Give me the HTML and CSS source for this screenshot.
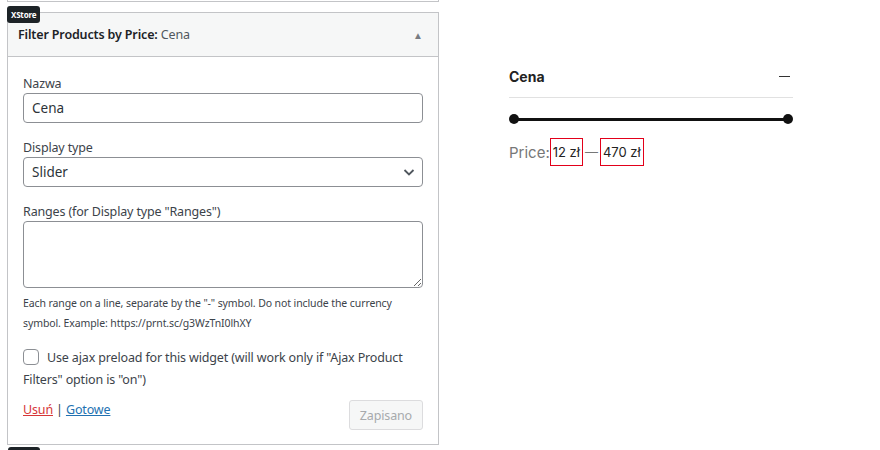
FILE: index.html
```html
<!DOCTYPE html>
<html lang="pl">
<head>
    <meta charset="UTF-8">
    <title>Filter Products by Price</title>
    <link rel="stylesheet" href="styles.css">
</head>
<body>

    <div class="page">
        <div class="admin-col">
            <div class="prev-widget"></div>

            <div class="widget">
                <span class="badge">XStore</span>
                <div class="widget-top">
                    <h3>Filter Products by Price:<span class="in-title"> Cena</span></h3>
                    <span class="toggle">&#9650;</span>
                </div>

                <div class="widget-inside">
                    <p class="field">
                        <label>Nazwa</label>
                        <input type="text" class="control" value="Cena">
                    </p>
                    <p class="field">
                        <label>Display type</label>
                        <span class="select control">
                            Slider
                            <svg width="14" height="14" viewBox="0 0 14 14"><path d="M2.5 5l4.5 4.5L11.5 5" fill="none" stroke="#50575e" stroke-width="1.8"/></svg>
                        </span>
                    </p>
                    <p class="field">
                        <label>Ranges (for Display type "Ranges")</label>
                        <textarea class="control area"></textarea>
                    </p>
                    <p class="help">Each range on a line, separate by the "-" symbol. Do not include the currency symbol. Example: https://prnt.sc/g3WzTnI0lhXY</p>
                    <p class="check">
                        <span class="box"></span>Use ajax preload for this widget (will work only if "Ajax Product Filters" option is "on")
                    </p>
                    <div class="widget-actions">
                        <div class="links">
                            <a class="del" href="#">Usuń</a> | <a class="done" href="#">Gotowe</a>
                        </div>
                        <button class="btn" disabled>Zapisano</button>
                    </div>
                </div>
            </div>

            <span class="next-badge"></span>
        </div>

        <div class="preview">
            <div class="preview-head">
                <span class="preview-title">Cena</span>
                <span class="minus"></span>
            </div>
            <div class="slider">
                <span class="handle"></span>
                <span class="track"></span>
                <span class="handle"></span>
            </div>
            <div class="price">
                <span class="price-label">Price:</span><span class="amount">12 zł</span><span class="dash">—</span><span class="amount">470 zł</span>
            </div>
        </div>
    </div>

</body>
</html>
```

FILE: styles.css
```css
body {
    margin: 0;
    background: #fff;
    font-family: 'Noto Sans', 'Open Sans', sans-serif;
    color: #3c434a;
}

.page {
    display: flex;
    align-items: flex-start;
}

.admin-col {
    width: 432px;
    margin-left: 7px;
}

.prev-widget {
    height: 1px;
    border: 1px solid #c3c4c7;
    border-top: none;
}

.widget {
    position: relative;
    margin-top: 10px;
    border: 1px solid #c3c4c7;
    background: #fff;
}

.badge {
    position: absolute;
    top: -7px;
    left: -1px;
    background: #1d2327;
    color: #fff;
    font-size: 8px;
    font-weight: 700;
    line-height: 17px;
    padding: 0 4px;
    border-radius: 3px;
    letter-spacing: -0.2px;
}

.widget-top {
    display: flex;
    justify-content: space-between;
    align-items: center;
    height: 43px;
    padding: 0 15px 0 10px;
    background: #f6f7f7;
    border-bottom: 1px solid #c3c4c7;
}

.widget-top h3 {
    margin: 0;
    font-size: 12.5px;
    font-weight: 600;
    color: #1d2327;
    letter-spacing: -0.15px;
}

.in-title {
    font-weight: 400;
    color: #50575e;
}

.toggle {
    font-size: 10px;
    color: #787c82;
}

.widget-inside {
    padding: 18px 15px 14px 15px;
    font-size: 12.5px;
    letter-spacing: -0.15px;
}

.field {
    margin: 0 0 16px;
}

.field label {
    display: block;
    line-height: 18px;
}

.control {
    display: block;
    box-sizing: border-box;
    width: 100%;
    height: 30px;
    margin: 0;
    padding: 0 8px;
    font-family: inherit;
    font-size: 13.5px;
    letter-spacing: 0;
    color: #2c3338;
    border: 1px solid #8c8f94;
    border-radius: 4px;
    background: #fff;
}

.select {
    display: flex;
    align-items: center;
    justify-content: space-between;
    height: 30px;
    padding: 0 6px 0 8px;
}

.area {
    height: 67px;
    resize: vertical;
}

.help {
    margin: -11px 0 14px;
    font-size: 10.5px;
    line-height: 20px;
    letter-spacing: -0.1px;
}

.check {
    margin: 0 0 9px;
    line-height: 22px;
}

.box {
    display: inline-block;
    box-sizing: border-box;
    width: 16px;
    height: 16px;
    border: 1px solid #8c8f94;
    border-radius: 4px;
    vertical-align: -3px;
    margin-right: 8px;
}

.widget-actions {
    display: flex;
    justify-content: space-between;
    align-items: flex-start;
}

.links {
    line-height: 20px;
}

.links a {
    text-decoration: underline;
}

.del {
    color: #d63638;
}

.done {
    color: #2271b1;
}

.btn {
    height: 30px;
    padding: 0 10px;
    font-family: inherit;
    font-size: 12.5px;
    letter-spacing: -0.15px;
    color: #a7aaad;
    background: #f6f7f7;
    border: 1px solid #dcdcde;
    border-radius: 3px;
}

.next-badge {
    display: block;
    width: 32px;
    height: 3px;
    margin: 2px 0 0 1px;
    background: #1d2327;
    border-radius: 3px 3px 0 0;
}

.preview {
    width: 284px;
    margin: 68px 0 0 70px;
    font-family: Inter, 'Liberation Sans', sans-serif;
}

.preview-head {
    display: flex;
    justify-content: space-between;
    align-items: center;
    padding-bottom: 12px;
    border-bottom: 1px solid #e1e1e1;
}

.preview-title {
    font-size: 14px;
    font-weight: 700;
    color: #222;
}

.minus {
    width: 11px;
    height: 1px;
    margin-right: 3px;
    background: #333;
}

.slider {
    display: flex;
    align-items: center;
    margin-top: 16px;
}

.track {
    flex: 1;
    height: 3px;
    background: #111;
    margin: 0 -2px;
}

.handle {
    width: 10px;
    height: 10px;
    border-radius: 50%;
    background: #111;
}

.price {
    display: flex;
    align-items: center;
    margin-top: 14px;
}

.price-label {
    font-size: 15px;
    color: #777;
}

.amount {
    border: 1px solid #e2001a;
    padding: 5px 2px;
    font-size: 13px;
    color: #222;
}

.dash {
    margin: 0 2px;
    color: #777;
    font-size: 13px;
}
```
